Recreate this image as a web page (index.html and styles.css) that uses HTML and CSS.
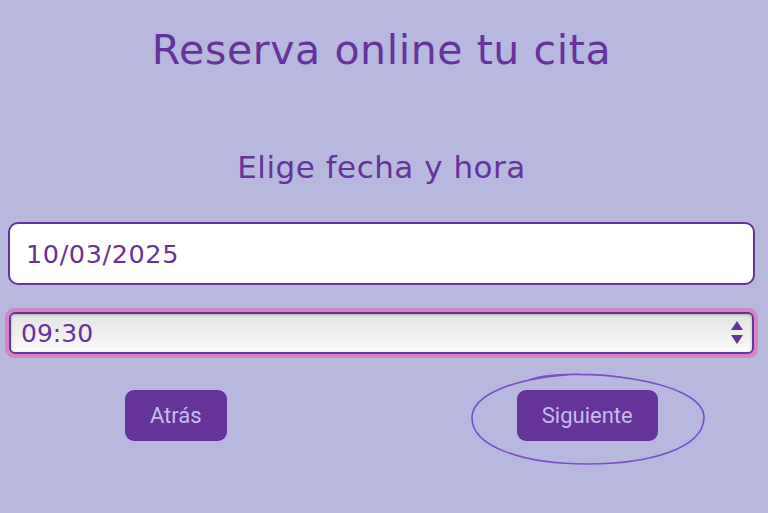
FILE: index.html
```html
<!DOCTYPE html>
<html lang="es">
<head>
<meta charset="utf-8">
<link rel="stylesheet" href="styles.css">
</head>
<body>
<main class="page">
  <h1 class="title">Reserva online tu cita</h1>
  <h2 class="subtitle">Elige fecha y hora</h2>
  <div class="field date-field">10/03/2025</div>
  <div class="select-ring">
    <div class="select">
      <span>09:30</span>
      <svg class="arrows" width="14" height="26" viewBox="0 0 14 26"><path d="M7 1 L13 10 H1 Z M1 15 H13 L7 24 Z" fill="#663399"/></svg>
    </div>
  </div>
  <div class="actions">
    <div class="slot"><button class="btn">Atrás</button></div>
    <div class="slot">
      <button class="btn">Siguiente</button>
      <svg class="circle" width="240" height="100" viewBox="0 0 240 100"><path d="M60 12 C 100 -2, 236 10, 235 50 C 234 80, 182 96, 118 96 C 55 96, 3 79, 3 50 C 3 28, 40 10, 110 6" fill="none" stroke="#7a4fc6" stroke-width="1.6"/></svg>
    </div>
  </div>
</main>
</body>
</html>
```
FILE: styles.css
```css
html, body { margin: 0; padding: 0; }
body {
  background: #b8b8de;
  font-family: "DejaVu Sans", sans-serif;
  color: #663399;
  width: 768px;
  height: 513px;
  overflow: hidden;
}
.page { padding: 0 13px 0 8px; }
.title {
  margin: 0;
  padding-top: 23px;
  text-align: center;
  font-weight: 400;
  font-size: 41px;
  line-height: 54px;
  letter-spacing: 0.6px;
}
.subtitle {
  margin: 0;
  padding-top: 69px;
  text-align: center;
  font-weight: 400;
  font-size: 31px;
  line-height: 42px;
  letter-spacing: 0.5px;
}
.field {
  margin-top: 34px;
  height: 63px;
  box-sizing: border-box;
  background: #fff;
  border: 2px solid #663399;
  border-radius: 10px;
  padding-left: 16px;
  display: flex;
  align-items: center;
  font-size: 25.5px;
  letter-spacing: 0.6px;
}
.select-ring {
  margin: 23px -3px 0 -3px;
  border: 4px solid #d884c4;
  border-radius: 9px;
}
.select {
  height: 42px;
  box-sizing: border-box;
  border: 2px solid #663399;
  border-radius: 6px;
  background: linear-gradient(#e4e4e4, #fafafa);
  box-shadow: inset 0 1px 3px rgba(0,0,0,0.25);
  display: flex;
  align-items: center;
  justify-content: space-between;
  padding: 0 8px 0 10px;
  font-size: 25px;
}
.actions {
  margin: 32px -38px 0 -38px;
  display: grid;
  grid-template-columns: 1fr 1fr;
}
.slot {
  position: relative;
  display: flex;
  justify-content: center;
}
.btn {
  background: #663399;
  color: #c4bdea;
  border: none;
  border-radius: 9px;
  height: 51px;
  padding: 0 25px;
  font-family: Roboto, "Liberation Sans", sans-serif;
  font-size: 22px;
}
.circle {
  position: absolute;
  left: 50%;
  top: -22px;
  margin-left: -118px;
  pointer-events: none;
}
```
